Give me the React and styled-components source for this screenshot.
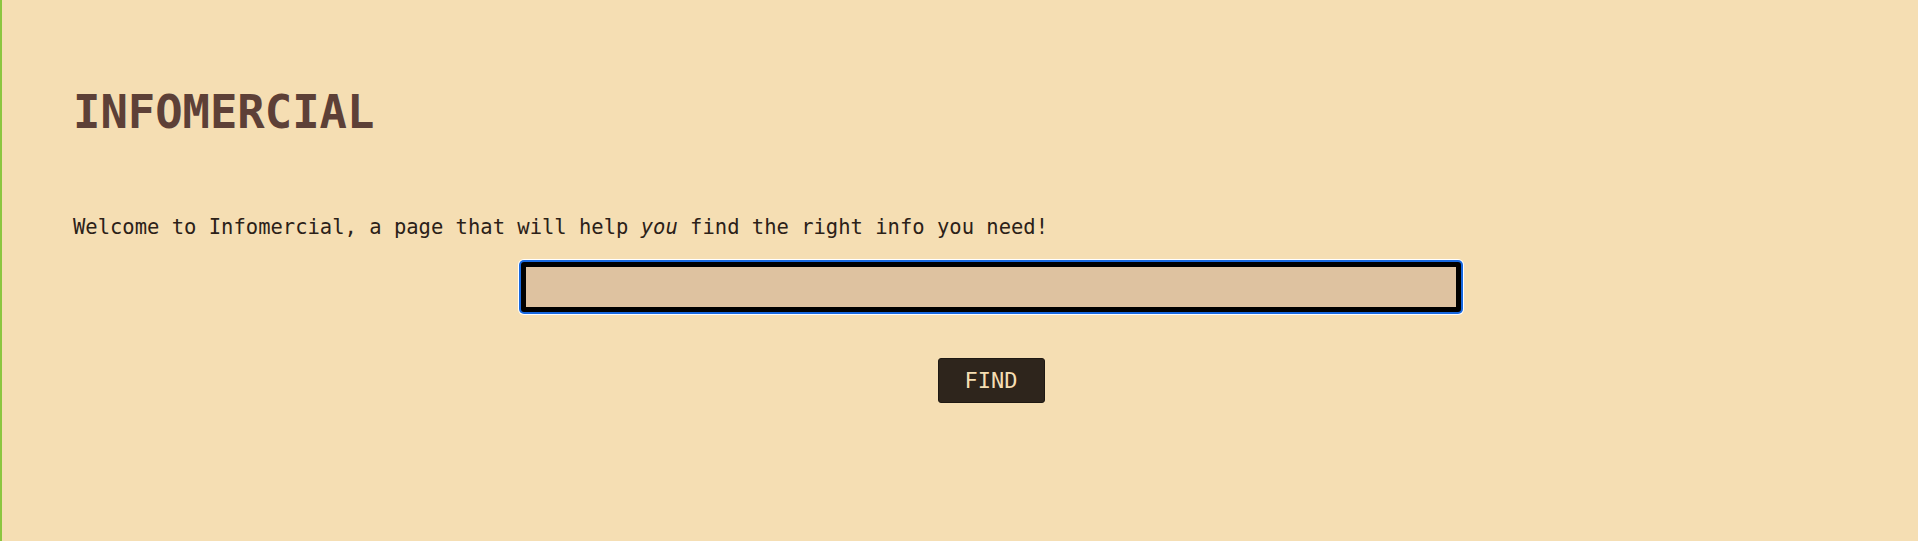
import React, { useState } from "react";
import styled, { createGlobalStyle } from "styled-components";

const GlobalStyle = createGlobalStyle`
  html, body {
    margin: 0;
    padding: 0;
    background-color: #f5deb3;
  }

  body {
    font-family: "DejaVu Sans Mono", "Liberation Mono", monospace;
  }
`;

const Page = styled.main`
  box-sizing: border-box;
  min-height: 100vh;
  border-left: 2px solid #8cc63f;
  padding: 86px 9px 40px 71px;
`;

const Title = styled.h1`
  margin: 0;
  font-size: 45.5px;
  line-height: 54px;
  font-weight: bold;
  color: #5d4037;
`;

const Intro = styled.p`
  margin: 75px 0 0;
  font-size: 20.5px;
  line-height: 24px;
  color: #2b2118;

  em {
    font-style: italic;
  }
`;

const SearchForm = styled.form`
  display: flex;
  flex-direction: column;
  align-items: center;
  gap: 46px;
  margin-top: 23px;
`;

const SearchInput = styled.input`
  box-sizing: border-box;
  width: 940px;
  height: 50px;
  padding: 0 6px;
  border: 5px solid #000;
  border-radius: 3px;
  background-color: #dec2a0;
  font-family: inherit;
  font-size: 24px;
  color: #2b2118;
  caret-color: #2b2118;
  outline: none;
  box-shadow: 0 0 0 2px #1768e0, 0 0 0 3px #fff;
`;

const FindButton = styled.button`
  box-sizing: border-box;
  width: 107px;
  height: 45px;
  padding: 0;
  border: 1px solid #1e1812;
  border-radius: 3px;
  background-color: #2e251c;
  color: #f5deb3;
  font-family: inherit;
  font-size: 22px;
  cursor: pointer;

  &:hover {
    background-color: #3d3226;
  }
`;

const App = () => {
  const [query, setQuery] = useState("");

  const handleSubmit = (event) => {
    event.preventDefault();
  };

  return (
    <>
      <GlobalStyle />
      <Page>
        <Title>INFOMERCIAL</Title>
        <Intro>
          Welcome to Infomercial, a page that will help <em>you</em> find the right info you need!
        </Intro>
        <SearchForm onSubmit={handleSubmit}>
          <SearchInput
            type="text"
            autoFocus
            value={query}
            onChange={(event) => setQuery(event.target.value)}
          />
          <FindButton type="submit">FIND</FindButton>
        </SearchForm>
      </Page>
    </>
  );
};

export default App;
